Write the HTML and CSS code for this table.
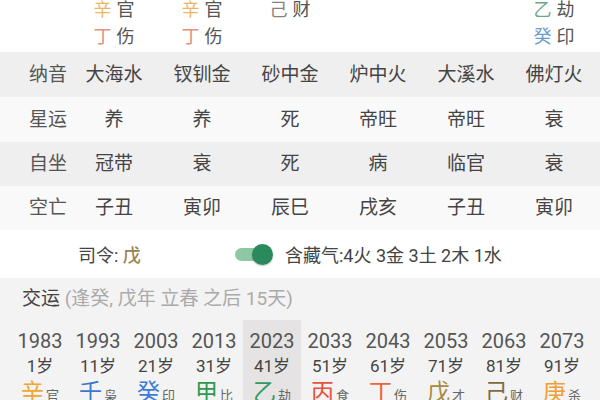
FILE: index.html
```html
<!DOCTYPE html>
<html>
	<head>
		<title>排盘</title>
		<meta charset="UTF-8">
		<link rel="stylesheet" href="styles.css">
	</head>
	<body>
		<div class="canggan">
			<div class="cg-row">
				<span class="cg-cell"><b class="c-xin">辛</b>官</span>
				<span class="cg-cell"><b class="c-xin">辛</b>官</span>
				<span class="cg-cell"><b class="c-ji">己</b>财</span>
				<span class="cg-cell"></span>
				<span class="cg-cell"></span>
				<span class="cg-cell"><b class="c-yi">乙</b>劫</span>
			</div>
			<div class="cg-row">
				<span class="cg-cell"><b class="c-ding">丁</b>伤</span>
				<span class="cg-cell"><b class="c-ding">丁</b>伤</span>
				<span class="cg-cell"></span>
				<span class="cg-cell"></span>
				<span class="cg-cell"></span>
				<span class="cg-cell"><b class="c-gui">癸</b>印</span>
			</div>
		</div>

		<div class="pan-row dark r1">
			<span class="label">纳音</span>
			<span>大海水</span><span>钗钏金</span><span>砂中金</span><span>炉中火</span><span>大溪水</span><span>佛灯火</span>
		</div>
		<div class="pan-row light r1">
			<span class="label">星运</span>
			<span>养</span><span>养</span><span>死</span><span>帝旺</span><span>帝旺</span><span>衰</span>
		</div>
		<div class="pan-row dark">
			<span class="label">自坐</span>
			<span>冠带</span><span>衰</span><span>死</span><span>病</span><span>临官</span><span>衰</span>
		</div>
		<div class="pan-row light">
			<span class="label">空亡</span>
			<span>子丑</span><span>寅卯</span><span>辰巳</span><span>戌亥</span><span>子丑</span><span>寅卯</span>
		</div>

		<div class="siling-row">
			<div class="siling">司令: <span class="siling-gan">戊</span></div>
			<div class="toggle"><div class="toggle-knob"></div></div>
			<div class="hidden-qi">含藏气:4火 3金 3土 2木 1水</div>
		</div>

		<div class="dayun">
			<div class="dayun-title">交运 <span class="dayun-note">(逢癸, 戊年 立春 之后 15天)</span></div>
			<div class="dayun-grid">
				<div class="dy-col"><div class="dy-year">1983</div><div class="dy-age">1岁</div><div class="dy-gan"><b class="g-xin">辛</b>官</div></div>
				<div class="dy-col"><div class="dy-year">1993</div><div class="dy-age">11岁</div><div class="dy-gan"><b class="g-ren">壬</b>枭</div></div>
				<div class="dy-col"><div class="dy-year">2003</div><div class="dy-age">21岁</div><div class="dy-gan"><b class="g-gui">癸</b>印</div></div>
				<div class="dy-col"><div class="dy-year">2013</div><div class="dy-age">31岁</div><div class="dy-gan"><b class="g-jia">甲</b>比</div></div>
				<div class="dy-col current"><div class="dy-year">2023</div><div class="dy-age">41岁</div><div class="dy-gan"><b class="g-yi">乙</b>劫</div></div>
				<div class="dy-col"><div class="dy-year">2033</div><div class="dy-age">51岁</div><div class="dy-gan"><b class="g-bing">丙</b>食</div></div>
				<div class="dy-col"><div class="dy-year">2043</div><div class="dy-age">61岁</div><div class="dy-gan"><b class="g-ding">丁</b>伤</div></div>
				<div class="dy-col"><div class="dy-year">2053</div><div class="dy-age">71岁</div><div class="dy-gan"><b class="g-wu">戊</b>才</div></div>
				<div class="dy-col"><div class="dy-year">2063</div><div class="dy-age">81岁</div><div class="dy-gan"><b class="g-ji">己</b>财</div></div>
				<div class="dy-col"><div class="dy-year">2073</div><div class="dy-age">91岁</div><div class="dy-gan"><b class="g-geng">庚</b>杀</div></div>
			</div>
		</div>
	</body>
</html>
```

FILE: styles.css
```css
html, body {
	margin: 0;
	height: 100%;
	overflow: hidden;
}
body {
	background: #fff;
	font-family: Roboto, "Noto Sans CJK SC", sans-serif;
	color: #444;
}
b {
	font-weight: normal;
}

/* hidden stems on top */
.canggan {
	padding: 1px 0 6px 70px;
	height: 45px;
	display: flex;
	flex-direction: column;
	gap: 9px;
}
.cg-row {
	display: grid;
	grid-template-columns: repeat(6, 88px);
	height: 18px;
	line-height: 18px;
	font-size: 18px;
	color: #555;
}
.cg-cell {
	text-align: center;
}
.cg-cell b {
	margin-right: 5px;
}
.c-xin { color: #eab665; }
.c-ding { color: #e3907f; }
.c-ji { color: #8a8377; }
.c-yi { color: #6aa987; }
.c-gui { color: #6c9ccb; }

/* table rows */
.pan-row {
	display: grid;
	grid-template-columns: 44px repeat(6, 88px);
	padding-left: 26px;
	height: 44px;
	line-height: 44px;
	font-size: 19px;
	text-align: center;
	color: #444;
}
.pan-row.r1 {
	height: 45px;
	line-height: 45px;
}
.pan-row .label {
	color: #555;
}
.dark {
	background: #efefef;
}
.light {
	background: #f9f9f9;
}

/* siling */
.siling-row {
	height: 48px;
	display: flex;
	align-items: center;
	padding-left: 78px;
	font-size: 18px;
	color: #444;
}
.siling {
	width: 157px;
}
.siling-gan {
	color: #97834f;
	font-weight: 500;
}
.toggle {
	position: relative;
	width: 36px;
	height: 13px;
	border-radius: 7px;
	background: #8ec7a4;
	margin-right: 14px;
}
.toggle-knob {
	position: absolute;
	right: -2px;
	top: -4px;
	width: 21px;
	height: 21px;
	border-radius: 50%;
	background: #2b8a5c;
	box-shadow: 0 1px 2px rgba(0, 0, 0, 0.25);
}
.hidden-qi {
	font-size: 18px;
}

/* dayun */
.dayun {
	background: #f3f3f3;
	height: 122px;
	overflow: hidden;
}
.dayun-title {
	height: 42px;
	line-height: 42px;
	padding-left: 22px;
	font-size: 19px;
	color: #444;
}
.dayun-note {
	color: #aaa;
}
.dayun-grid {
	display: grid;
	grid-template-columns: repeat(10, 58px);
	padding-left: 11px;
}
.dy-col {
	text-align: center;
	padding-top: 8px;
	height: 72px;
}
.dy-col.current {
	background: #e5e3e3;
}
.dy-year {
	font-size: 20px;
	line-height: 26px;
	color: #555;
}
.dy-age {
	font-size: 17px;
	line-height: 24px;
	color: #444;
}
.dy-gan {
	font-size: 13px;
	line-height: 30px;
	color: #666;
}
.dy-gan b {
	font-size: 23px;
	margin-right: 2px;
}
.g-xin { color: #f0a633; }
.g-ren { color: #3c78cf; }
.g-gui { color: #3d7bd8; }
.g-jia { color: #2f9a4f; }
.g-yi { color: #2f9a60; }
.g-bing { color: #e6533d; }
.g-ding { color: #e8673e; }
.g-wu { color: #a88a40; }
.g-ji { color: #7d6c43; }
.g-geng { color: #f0a032; }
```
